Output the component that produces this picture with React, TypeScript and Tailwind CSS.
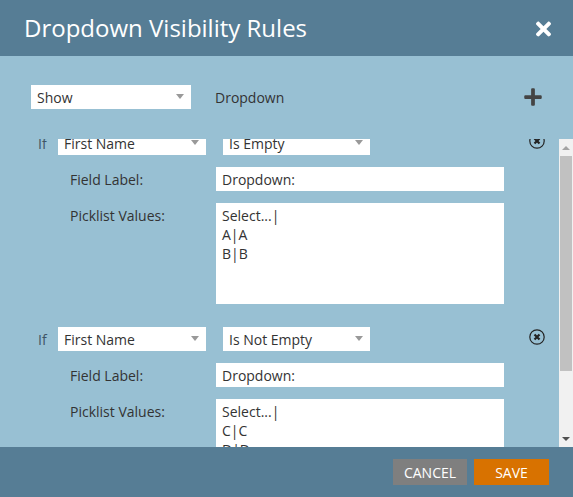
import { FaPlus, FaTimes } from "react-icons/fa";

function Select({ value, width }: { value: string; width: string }) {
  return (
    <div className={`${width} h-6 bg-white flex items-center justify-between pl-[6px] pr-[7px] shrink-0`}>
      <span className="h-6 text-[14px] text-[#333] leading-[26px]">{value}</span>
      <span className="w-0 h-0 border-x-[4px] border-x-transparent border-t-[5px] border-t-[#999] -mt-[1px]" />
    </div>
  );
}

function RemoveIcon() {
  return (
    <svg width="16" height="16" viewBox="0 0 16 16" className="text-[#222]">
      <circle cx="8" cy="8" r="7.2" fill="none" stroke="currentColor" strokeWidth="1.2" />
      <path d="M5.5 5.5 10.5 10.5M10.5 5.5 5.5 10.5" stroke="currentColor" strokeWidth="2.2" />
    </svg>
  );
}

function Rule({ field, op, values }: { field: string; op: string; values: string[] }) {
  return (
    <div className="pl-[38px] pb-[23px]">
      <div className="flex items-center h-6">
        <span className="w-5 h-6 text-[14px] leading-[26px] text-[#3f5566]">If</span>
        <Select value={field} width="w-[148px]" />
        <div className="ml-[17px]">
          <Select value={op} width="w-[147px]" />
        </div>
        <div className="ml-[159px] -mt-[4px]">
          <RemoveIcon />
        </div>
      </div>
      <div className="flex mt-3">
        <span className="w-[178px] h-6 pl-[32px] text-[14px] leading-[26px] text-[#333]">Field Label:</span>
        <div className="w-[288px] h-6 bg-white px-[6px] text-[14px] leading-[26px] text-[#333]">Dropdown:</div>
      </div>
      <div className="flex mt-3">
        <span className="w-[178px] h-6 pl-[32px] text-[14px] leading-[26px] text-[#333]">Picklist Values:</span>
        <div className="w-[288px] h-[101px] bg-white px-[6px] pt-[3px] text-[14px] leading-[19px] text-[#333]">
          {values.map((v) => (
            <div key={v}>{v}</div>
          ))}
        </div>
      </div>
    </div>
  );
}

export default function App() {
  return (
    <div className="w-[573px] h-[497px] flex flex-col bg-[#98c0d3] font-['Open_Sans',sans-serif] overflow-hidden">
      <header className="h-14 shrink-0 bg-[#567d95] flex items-center justify-between pl-6 pr-[22px]">
        <h1 className="text-[24px] leading-8 text-white -mt-[1px]">Dropdown Visibility Rules</h1>
        <FaTimes className="text-white w-[15px] h-[22px] mt-[2px]" />
      </header>

      <div className="h-[83px] shrink-0 pt-[29px] pl-[31px] pr-[30px]">
        <div className="flex items-center h-6">
          <Select value="Show" width="w-[160px]" />
          <span className="ml-6 h-6 text-[14px] leading-[26px] text-[#333]">Dropdown</span>
          <FaPlus className="ml-auto w-5 h-5 text-[#444]" />
        </div>
      </div>

      <div className="flex-1 flex min-h-0">
        <div className="flex-1 overflow-hidden">
          <div className="-mt-2">
            <Rule field="First Name" op="Is Empty" values={["Select...|", "A|A", "B|B"]} />
            <Rule field="First Name" op="Is Not Empty" values={["Select...|", "C|C", "D|D"]} />
          </div>
        </div>
        <div className="w-[14px] bg-[#f1f1f1] flex flex-col items-center">
          <div className="h-[17px] flex items-center justify-center">
            <span className="w-0 h-0 border-x-[4px] border-x-transparent border-b-[4px] border-b-[#a3a3a3]" />
          </div>
          <div className="w-[12px] h-[215px] bg-[#c1c1c1]" />
          <div className="flex-1" />
          <div className="h-[17px] flex items-center justify-center">
            <span className="w-0 h-0 border-x-[4px] border-x-transparent border-t-[4px] border-t-[#505050]" />
          </div>
        </div>
      </div>

      <footer className="h-[50px] shrink-0 bg-[#567d95] flex justify-end gap-[7px] pt-3 pr-6">
        <button className="w-[74px] h-[26px] bg-[#7f7f7f] text-white text-[14px]">CANCEL</button>
        <button className="w-[75px] h-[26px] bg-[#d87200] text-white text-[14px]">SAVE</button>
      </footer>
    </div>
  );
}
